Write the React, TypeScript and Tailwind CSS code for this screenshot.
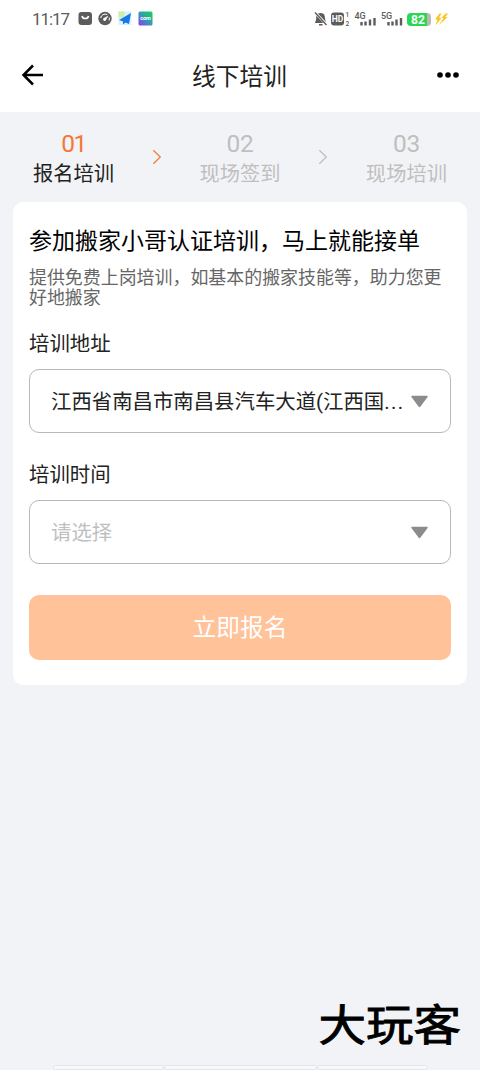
import { useState, type ReactNode } from "react";

const STEPS = [
  { no: "01", label: "报名培训" },
  { no: "02", label: "现场签到" },
  { no: "03", label: "现场培训" },
];

const ADDRESS = "江西省南昌市南昌县汽车大道(江西国";

export default function App() {
  const [address] = useState(ADDRESS);
  const [time] = useState("");

  return (
    <div className="flex h-[1070px] w-[480px] flex-col overflow-hidden bg-[#f2f3f6] font-['Roboto','Noto_Sans_CJK_SC',sans-serif] text-[#222]">
      <StatusBar />

      <header className="flex h-[74px] shrink-0 items-center justify-between bg-white pr-5 pl-[21px]">
        <button type="button" aria-label="返回">
          <BackIcon />
        </button>
        <h1 className="pt-[3px] text-[23.7px] leading-8">线下培训</h1>
        <button type="button" aria-label="更多">
          <MoreIcon />
        </button>
      </header>

      <Steps current={0} />

      <main className="mx-[13px] h-[483px] shrink-0 rounded-[10px] bg-white px-4 pt-6">
        <h2 className="text-[23px] leading-8 text-black">
          参加搬家小哥认证培训，马上就能接单
        </h2>
        <p className="mt-[10px] text-[17.95px] leading-5 text-[#666]">
          提供免费上岗培训，如基本的搬家技能等，助力您更好地搬家
        </p>

        <Field label="培训地址" className="mt-[22px]">
          <Select value={address} truncated />
        </Field>
        <Field label="培训时间" className="mt-7">
          <Select value={time} />
        </Field>

        <button
          type="button"
          className="mt-[31px] flex h-[65px] w-full items-center justify-center rounded-[10px] bg-[#ffc299] pt-[2px] text-[23.7px] text-white"
        >
          立即报名
        </button>
      </main>

      <footer className="mt-auto flex flex-col">
        <p className="mr-[19px] origin-center scale-y-90 self-end font-['Noto_Sans_CJK_SC',sans-serif] text-[47.5px] leading-[70px] font-normal text-black [-webkit-text-stroke:1px_black]">
          大玩客
        </p>
        <div className="mt-[7px] ml-[53px] flex h-[5px] w-[375px]">
          <span className="w-[111px] rounded-sm border border-[#e3e5e8] bg-[#f8f9fa]" />
          <span className="w-[153px] rounded-sm border border-[#e3e5e8] bg-[#f8f9fa]" />
          <span className="w-[111px] rounded-sm border border-[#e3e5e8] bg-[#f8f9fa]" />
        </div>
      </footer>
    </div>
  );
}

function StatusBar() {
  return (
    <div className="flex h-[38px] shrink-0 items-center justify-between bg-white px-8 text-[#5c5c5c]">
      <div className="flex items-center">
        <span className="w-[46px] text-[17px] leading-5 tracking-[-1.1px]">
          11:17
        </span>
        <svg width="76" height="16" viewBox="0 0 76 16">
          <rect x="0.5" y="1" width="13.5" height="13" rx="3" fill="#5c5c5c" />
          <path
            d="M4 5c.8 3.4 5.7 3.4 6.5 0"
            fill="none"
            stroke="#fff"
            strokeWidth="1.6"
          />
          <circle cx="27" cy="7.5" r="6.7" fill="#5c5c5c" />
          <path
            d="M22.7 7a4.6 4.6 0 0 1 6.5-3.5M31.3 6.5a4.5 4.5 0 0 1-.3 3"
            fill="none"
            stroke="#fff"
            strokeWidth="1"
          />
          <path d="M30.5 4.5 28 9a1.5 1.5 0 1 1-2-2z" fill="#fff" />
          <rect x="40.5" y="0.5" width="13" height="13.5" fill="#d9f3fb" />
          <path d="M40.5.5h6v6h-6z" fill="#ccefa8" />
          <path d="M53 2 41 9l4 1.5v3l2.5-2 3.5 1.5z" fill="#1878e8" />
          <defs>
            <linearGradient id="app-tile" x1="1" y1="0" x2="0" y2="1">
              <stop offset="0" stopColor="#16d84c" />
              <stop offset="0.5" stopColor="#2f9db5" />
              <stop offset="1" stopColor="#9a35f0" />
            </linearGradient>
          </defs>
          <rect x="60.5" y="0.5" width="14" height="14" rx="1.5" fill="url(#app-tile)" />
          <text
            x="67.5"
            y="9.2"
            textAnchor="middle"
            fontSize="5.5"
            fontWeight="700"
            fill="#fff"
          >
            com
          </text>
        </svg>
      </div>

      <div className="flex items-center">
        <svg width="92" height="18" viewBox="314 10 92 18">
          <path
            d="M320.5 13c4 0 4.5 3 4.5 5.5l1 4.5h-11l1.2-4c0-3 .3-6 4.3-6zM319 24h3.5v1.5H319z"
            fill="#5c5c5c"
          />
          <path d="m314.5 12 12.5 13" stroke="#fff" strokeWidth="2.6" />
          <path d="m315 12.5 11.5 12.5" stroke="#5c5c5c" strokeWidth="1.4" />
          <rect x="331" y="12.5" width="13" height="13" rx="3" fill="#5c5c5c" />
          <text
            x="337.5"
            y="22.3"
            textAnchor="middle"
            fontSize="8.5"
            fontWeight="700"
            fill="#fff"
          >
            HD
          </text>
          <g fill="#5c5c5c" fontWeight="500">
            <text x="345.5" y="17" fontSize="6.5">
              1
            </text>
            <text x="345.5" y="25.8" fontSize="6.5">
              2
            </text>
            <text x="354.5" y="19" fontSize="9">
              4G
            </text>
            <text x="381" y="19" fontSize="9">
              5G
            </text>
          </g>
          <path
            d="M361.5 25.500v-3.500M365.5 25.500v-4M370 25.500v-6M374.5 25.500v-7.500M388.5 25.500v-3.500M392.5 25.500v-4M396.5 25.500v-6M401 25.500v-7.500"
            stroke="#5c5c5c"
            strokeWidth="2.4"
          />
        </svg>
        <div className="ml-[1px] flex h-[13px] w-[24px] items-center justify-center rounded-[4px] bg-linear-to-r from-[#28d850] from-85% to-[#b8b8b8] to-85% pt-px pr-[2px] text-[12px] leading-[12px] font-bold text-white">
          82
        </div>
        <svg className="ml-1" width="13" height="13" viewBox="0 0 13 13">
          <path d="M4.5.5 0 6.5h2.5l-2 6 6-7.5H4L6.5.5z" fill="#fbc51c" />
          <path d="M10.5.5 6.5 5h2L4 12l8.5-8h-2.3L13 .5z" fill="#fbc51c" />
        </svg>
      </div>
    </div>
  );
}

function Steps({ current }: { current: number }) {
  return (
    <ol className="flex h-[90px] shrink-0 items-start justify-between px-[33px] pt-[17px]">
      {STEPS.map((s, i) => (
        <li key={s.no} className="contents">
          {i > 0 && (
            <svg
              className="mt-5"
              width="10"
              height="16"
              viewBox="0 0 10 16"
              fill="none"
              stroke={i === current + 1 ? "#f0813c" : "#bfbfbf"}
              strokeWidth="1.3"
            >
              <path d="m1.3 1.2 7 6.8-7 6.8" />
            </svg>
          )}
          <div className="flex flex-col items-center">
            <span
              className={`text-[24.5px] leading-[29px] ${
                i === current
                  ? "tracking-[-1.5px] text-[#f47735]"
                  : "tracking-[-0.4px] text-[#bfbfbf]"
              }`}
            >
              {s.no}
            </span>
            <span
              className={`pt-[2px] text-[20.3px] leading-7 ${
                i === current ? "text-[#222]" : "text-[#bfbfbf]"
              }`}
            >
              {s.label}
            </span>
          </div>
        </li>
      ))}
    </ol>
  );
}

function Field({
  label,
  className,
  children,
}: {
  label: string;
  className: string;
  children: ReactNode;
}) {
  return (
    <section className={className}>
      <h3 className="mb-[10px] text-[20.4px] leading-[29px]">{label}</h3>
      {children}
    </section>
  );
}

function Select({ value, truncated }: { value: string; truncated?: boolean }) {
  return (
    <button
      type="button"
      className="flex h-16 w-full items-center justify-between rounded-[10px] border border-[#b8b8b8] bg-white px-[21px] text-left text-[20.4px]"
    >
      <span
        className={`pt-[2px] ${value ? "whitespace-nowrap" : "text-[#bfbfbf]"}`}
      >
        {value || "请选择"}
        {truncated && <span className="tracking-[1.4px]">...</span>}
      </span>
      <svg className="shrink-0" width="19" height="13" viewBox="0 0 19 13">
        <path
          d="M2 1.5h15l-7.5 10z"
          fill="#8c8c8c"
          stroke="#8c8c8c"
          strokeWidth="1.5"
          strokeLinejoin="round"
        />
      </svg>
    </button>
  );
}

function BackIcon() {
  return (
    <svg
      width="22"
      height="22"
      viewBox="0 0 22 22"
      fill="none"
      stroke="#000"
      strokeWidth="2.5"
    >
      <path d="M12 1.5 2.5 11l9.5 9.5M2.5 11H22" />
    </svg>
  );
}

function MoreIcon() {
  return (
    <svg width="24" height="8" viewBox="0 0 24 8">
      <circle cx="4" cy="4" r="2.8" />
      <circle cx="12" cy="4" r="2.8" />
      <circle cx="20" cy="4" r="2.8" />
    </svg>
  );
}
